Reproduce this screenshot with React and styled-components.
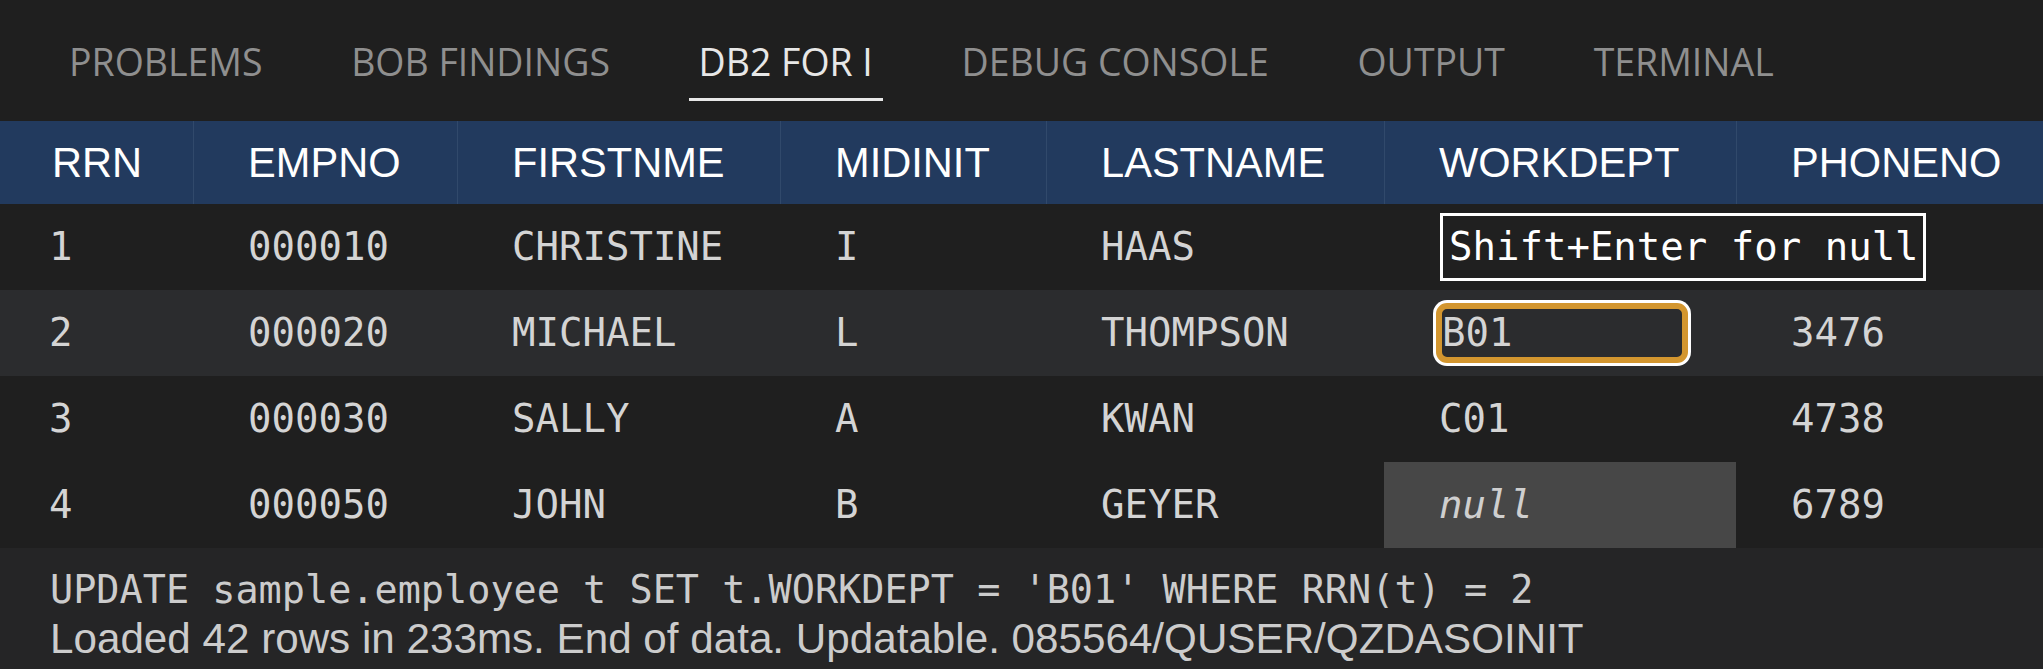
import React from 'react';
import styled, { createGlobalStyle } from 'styled-components';

const GlobalStyle = createGlobalStyle`
  html, body { margin: 0; padding: 0; background: #1f1f1f; }
  body { width: 2043px; height: 669px; overflow: hidden; }
`;

const COLS = '193px 264px 323px 266px 338px 352px 1fr';

const Panel = styled.div`
  width: 2043px;
  height: 669px;
  display: flex;
  flex-direction: column;
  background: #1f1f1f;
  overflow: hidden;
`;

const TabBar = styled.div`
  display: flex;
  align-items: flex-start;
  height: 121px;
  flex-shrink: 0;
  padding-left: 59px;
  gap: 68.7px;
  box-sizing: border-box;
`;

const Tab = styled.div`
  height: 50px;
  padding: 37px 10px 11px;
  border-bottom: 3px solid ${(p) => (p.$active ? '#e7e7e7' : 'transparent')};
  font-family: "Open Sans", "Noto Sans", sans-serif;
  font-size: 37.45px;
  line-height: 50px;
  color: ${(p) => (p.$active ? '#e7e7e7' : '#8f8f8f')};
  white-space: nowrap;
`;

const HeaderRow = styled.div`
  display: grid;
  grid-template-columns: ${COLS};
  height: 83px;
  flex-shrink: 0;
  background: #223a5e;
`;

const HeaderCell = styled.div`
  padding-left: ${(p) => (p.$first ? '52px' : '54px')};
  border-left: ${(p) => (p.$first ? 'none' : '1px solid #31496b')};
  font-family: "Liberation Sans", Arial, sans-serif;
  font-size: 41.6px;
  line-height: 83px;
  color: #ffffff;
  white-space: nowrap;
  overflow: hidden;
`;

const DataRow = styled.div`
  display: grid;
  grid-template-columns: ${COLS};
  height: 86px;
  flex-shrink: 0;
  background: ${(p) => (p.$selected ? '#2b2c2e' : '#1f1f1f')};
`;

const Cell = styled.div`
  position: relative;
  display: flex;
  align-items: center;
  padding-left: ${(p) => (p.$first ? '49px' : p.$editing ? '52px' : '55px')};
  background: ${(p) => (p.$null ? '#474747' : 'transparent')};
  font-family: "DejaVu Sans Mono", "Liberation Mono", monospace;
  font-size: 39px;
  font-style: ${(p) => (p.$null ? 'italic' : 'normal')};
  line-height: 86px;
  color: ${(p) => (p.$null ? '#cfcfcf' : '#d4d4d4')};
  white-space: nowrap;
`;

const Editor = styled.div`
  box-sizing: border-box;
  width: 252px;
  height: 60px;
  border: 6px solid #d3962f;
  border-radius: 11px;
  box-shadow: 0 0 0 3px #ffffff;
  background: #2b2c2e;
  line-height: 48px;
  color: #d4d4d4;
`;

const Hint = styled.div`
  position: absolute;
  left: 56px;
  top: 9px;
  z-index: 2;
  height: 62px;
  padding: 0 4px 0 6px;
  border: 3px solid #ffffff;
  background: #202020;
  color: #ffffff;
  line-height: 62px;
  white-space: nowrap;
`;

const StatusBar = styled.div`
  flex: 1;
  background: #252526;
  padding: 17px 0 0 50px;
  color: #cccccc;
`;

const SqlLine = styled.div`
  font-family: "DejaVu Sans Mono", "Liberation Mono", monospace;
  font-size: 38.5px;
  line-height: 49px;
  white-space: nowrap;
`;

const InfoLine = styled.div`
  font-family: "Liberation Sans", Arial, sans-serif;
  font-size: 42.2px;
  line-height: 49px;
  white-space: nowrap;
`;

const tabs = ['PROBLEMS', 'BOB FINDINGS', 'DB2 FOR I', 'DEBUG CONSOLE', 'OUTPUT', 'TERMINAL'];
const columns = ['RRN', 'EMPNO', 'FIRSTNME', 'MIDINIT', 'LASTNAME', 'WORKDEPT', 'PHONENO'];
const rows = [
  ['1', '000010', 'CHRISTINE', 'I', 'HAAS', '', ''],
  ['2', '000020', 'MICHAEL', 'L', 'THOMPSON', 'B01', '3476'],
  ['3', '000030', 'SALLY', 'A', 'KWAN', 'C01', '4738'],
  ['4', '000050', 'JOHN', 'B', 'GEYER', null, '6789'],
];

export default function App() {
  return (
    <>
      <GlobalStyle />
      <Panel>
        <TabBar>
          {tabs.map((t) => (
            <Tab key={t} $active={t === 'DB2 FOR I'}>{t}</Tab>
          ))}
        </TabBar>
        <HeaderRow>
          {columns.map((c, i) => (
            <HeaderCell key={c} $first={i === 0}>{c}</HeaderCell>
          ))}
        </HeaderRow>
        {rows.map((r, ri) => (
          <DataRow key={ri} $selected={ri === 1}>
            {r.map((v, ci) => {
              const editing = ri === 1 && ci === 5;
              const hint = ri === 0 && ci === 5;
              const isNull = v === null;
              return (
                <Cell key={ci} $first={ci === 0} $editing={editing} $null={isNull}>
                  {editing ? <Editor>{v}</Editor> : isNull ? 'null' : v}
                  {hint && <Hint>Shift+Enter for null</Hint>}
                </Cell>
              );
            })}
          </DataRow>
        ))}
        <StatusBar>
          <SqlLine>UPDATE sample.employee t SET t.WORKDEPT = 'B01' WHERE RRN(t) = 2</SqlLine>
          <InfoLine>Loaded 42 rows in 233ms. End of data. Updatable. 085564/QUSER/QZDASOINIT</InfoLine>
        </StatusBar>
      </Panel>
    </>
  );
}
